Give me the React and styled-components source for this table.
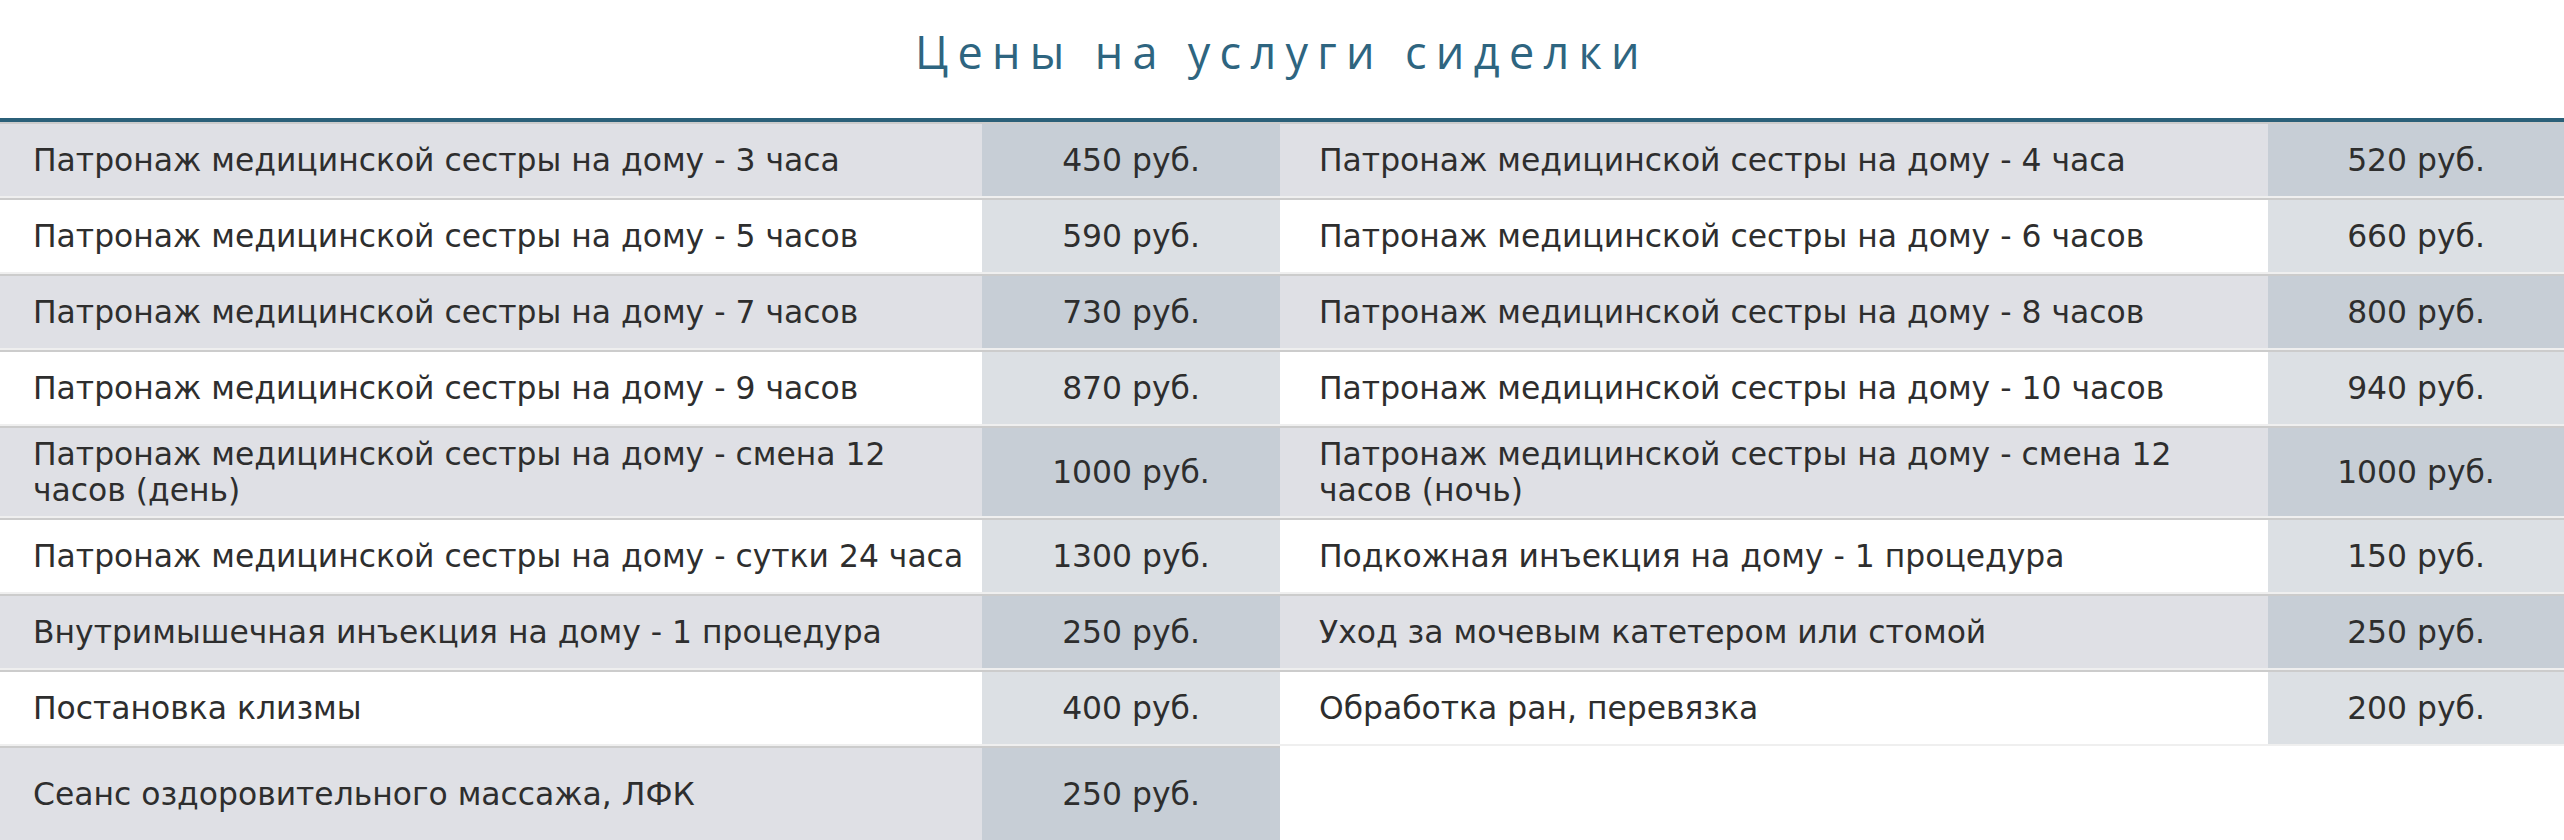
import React from 'react'
import styled, { createGlobalStyle } from 'styled-components'

const leftRows = [
  ['Патронаж медицинской сестры на дому - 3 часа', '450 руб.'],
  ['Патронаж медицинской сестры на дому - 5 часов', '590 руб.'],
  ['Патронаж медицинской сестры на дому - 7 часов', '730 руб.'],
  ['Патронаж медицинской сестры на дому - 9 часов', '870 руб.'],
  ['Патронаж медицинской сестры на дому - смена 12 часов (день)', '1000 руб.'],
  ['Патронаж медицинской сестры на дому - сутки 24 часа', '1300 руб.'],
  ['Внутримышечная инъекция на дому - 1 процедура', '250 руб.'],
  ['Постановка клизмы', '400 руб.'],
  ['Сеанс оздоровительного массажа, ЛФК', '250 руб.'],
]

const rightRows = [
  ['Патронаж медицинской сестры на дому - 4 часа', '520 руб.'],
  ['Патронаж медицинской сестры на дому - 6 часов', '660 руб.'],
  ['Патронаж медицинской сестры на дому - 8 часов', '800 руб.'],
  ['Патронаж медицинской сестры на дому - 10 часов', '940 руб.'],
  ['Патронаж медицинской сестры на дому - смена 12 часов (ночь)', '1000 руб.'],
  ['Подкожная инъекция на дому - 1 процедура', '150 руб.'],
  ['Уход за мочевым катетером или стомой', '250 руб.'],
  ['Обработка ран, перевязка', '200 руб.'],
]

/*---> Component <---*/
function PriceTable({ rows, width, priceWidth, indent, lastTall }) {
  return (
    <Table $width={width}>
      {rows.map(([name, price], i) => (
        <Row
          key={name}
          $priceWidth={priceWidth}
          $tall={lastTall && i === rows.length - 1}
        >
          <Name $odd={i % 2 === 0} $indent={indent}>{name}</Name>
          <Price $odd={i % 2 === 0}>{price}</Price>
        </Row>
      ))}
    </Table>
  )
}

export default function App() {
  return (
    <>
      <GlobalStyle />
      <Page>
        <Title>Цены на услуги сиделки</Title>
        <Tables>
          <PriceTable rows={leftRows} width='1280px' priceWidth='298px' indent='33px' lastTall />
          <PriceTable rows={rightRows} priceWidth='296px' indent='39px' />
        </Tables>
      </Page>
    </>
  )
}

/*---> Styles <---*/
const GlobalStyle = createGlobalStyle`
  html, body {
    margin: 0;
    padding: 0;
    background: #ffffff;
  }
`

const Page = styled.div`
  width: 2564px;
  height: 840px;
  overflow: hidden;
  font-family: 'DejaVu Sans', Verdana, sans-serif;
`

const Title = styled.h1`
  box-sizing: border-box;
  height: 118px;
  margin: 0;
  padding-top: 21px;
  font-family: 'Open Sans', sans-serif;
  font-size: 45px;
  font-weight: 400;
  line-height: normal;
  letter-spacing: 9.3px;
  text-align: center;
  color: #2e6580;
`

const Tables = styled.div`
  display: flex;
  align-items: flex-start;
  border-top: 4px solid #2b6079;
`

const Table = styled.div`
  width: ${(p) => p.$width || 'auto'};
  flex: ${(p) => (p.$width ? 'none' : '1')};
`

const Row = styled.div`
  display: grid;
  grid-template-columns: 1fr ${(p) => p.$priceWidth};
  min-height: ${(p) => (p.$tall ? '92px' : '72px')};
  border-top: 2px solid #cccccc;
  border-bottom: 2px solid #efefef;
`

const Cell = styled.div`
  display: flex;
  align-items: center;
  box-sizing: border-box;
  padding: 8px 0;
  font-size: 31.4px;
  line-height: 36px;
  color: #2e2e2e;
`

const Name = styled(Cell)`
  padding-left: ${(p) => p.$indent};
  padding-right: 10px;
  background: ${(p) => (p.$odd ? '#dfe0e5' : '#ffffff')};
`

const Price = styled(Cell)`
  justify-content: center;
  background: ${(p) => (p.$odd ? '#c7ced6' : '#dce0e4')};
`
